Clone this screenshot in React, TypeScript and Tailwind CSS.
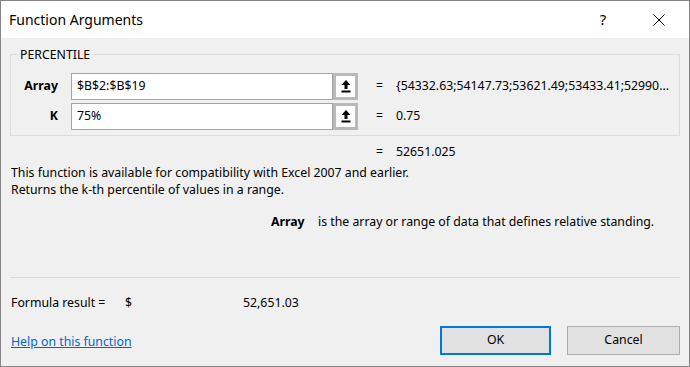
import React from "react"

const font = { fontFamily: '"Segoe UI", "Noto Sans", sans-serif' }

function RefIcon() {
    return (
        <svg width="10" height="13" viewBox="0 0 10 13" className="block">
            <polygon points="5,0 9.5,5 6.5,5 6.5,9 3.5,9 3.5,5 0.5,5" fill="#000" />
            <rect x="0.5" y="10.5" width="9" height="2" fill="#000" />
        </svg>
    )
}

function ArgRow({ label, value, result }: { label: string, value: string, result: string }) {
    return (
        <div className="flex items-center h-[27px]">
            <div className="w-[47px] text-right font-bold text-[12.3px] text-black">{label}</div>
            <div className="ml-[13px] w-[262px] h-full bg-white border border-[#a5a5a5] flex items-center pl-[5px] text-[12.3px] text-black">
                {value}
            </div>
            <div className="w-[25px] h-full border-[3px] border-[#b9b9b9] bg-white flex items-center justify-center">
                <RefIcon />
            </div>
            <div className="ml-[18px] w-[20px] text-[12.3px] text-black">=</div>
            <div className="text-[12.3px] text-black whitespace-nowrap overflow-hidden">{result}</div>
        </div>
    )
}

export default function App() {
    return (
        <div style={font} className="w-[690px] h-[367px] border border-[#858585] flex flex-col bg-[#f0f0f0] overflow-hidden">
            <div className="h-[37px] bg-white flex items-center pl-[8px] shrink-0">
                <div className="text-[14px] text-black">Function Arguments</div>
                <div className="ml-auto w-[20px] text-[15px] text-black text-center mr-[40px]">?</div>
                <svg width="12" height="12" viewBox="0 0 12 12" className="mr-[24px]">
                    <path d="M0.5 0.5 L11.5 11.5 M11.5 0.5 L0.5 11.5" stroke="#000" strokeWidth="1" />
                </svg>
            </div>

            <div className="flex flex-col px-[9px] flex-1">
                <div className="relative mt-[16px] h-[82px] border border-[#dcdcdc] pt-[18px] flex flex-col gap-[3px]">
                    <div className="absolute -top-[8px] left-[7px] px-[2px] bg-[#f0f0f0] text-[12.3px] leading-[16px] text-black">PERCENTILE</div>
                    <ArgRow label="Array" value="$B$2:$B$19" result="{54332.63;54147.73;53621.49;53433.41;52990..." />
                    <ArgRow label="K" value="75%" result="0.75" />
                </div>

                <div className="mt-[8px] h-[16px] flex items-center text-[12.3px] text-black">
                    <div className="ml-[366px] w-[20px]">=</div>
                    <div>52651.025</div>
                </div>

                <div className="mt-[4px] pl-[1px] text-[12.3px] leading-[17px] text-black">
                    <div>This function is available for compatibility with Excel 2007 and earlier.</div>
                    <div>Returns the k-th percentile of values in a range.</div>
                </div>

                <div className="mt-[16px] h-[17px] flex items-center text-[12.3px] text-black">
                    <div className="ml-[261px] w-[47px] font-bold">Array</div>
                    <div>is the array or range of data that defines relative standing.</div>
                </div>

                <div className="mt-[46px] border-t border-[#dadada]" />

                <div className="mt-[17px] h-[17px] flex items-center text-[12.3px] text-black pl-[1px]">
                    <div className="w-[114px]">Formula result =</div>
                    <div className="w-[118px]">$</div>
                    <div>52,651.03</div>
                </div>

                <div className="mt-[14px] h-[29px] flex items-center">
                    <a href="#" className="pl-[1px] pt-[3px] text-[12.3px] text-[#0066cc] underline">Help on this function</a>
                    <button className="ml-auto w-[111px] h-full border-2 border-[#0078d7] bg-[#e1e1e1] text-[12.3px] text-black">OK</button>
                    <button className="ml-[16px] w-[113px] h-full border border-[#adadad] bg-[#e1e1e1] text-[12.3px] text-black">Cancel</button>
                </div>
            </div>
        </div>
    )
}
